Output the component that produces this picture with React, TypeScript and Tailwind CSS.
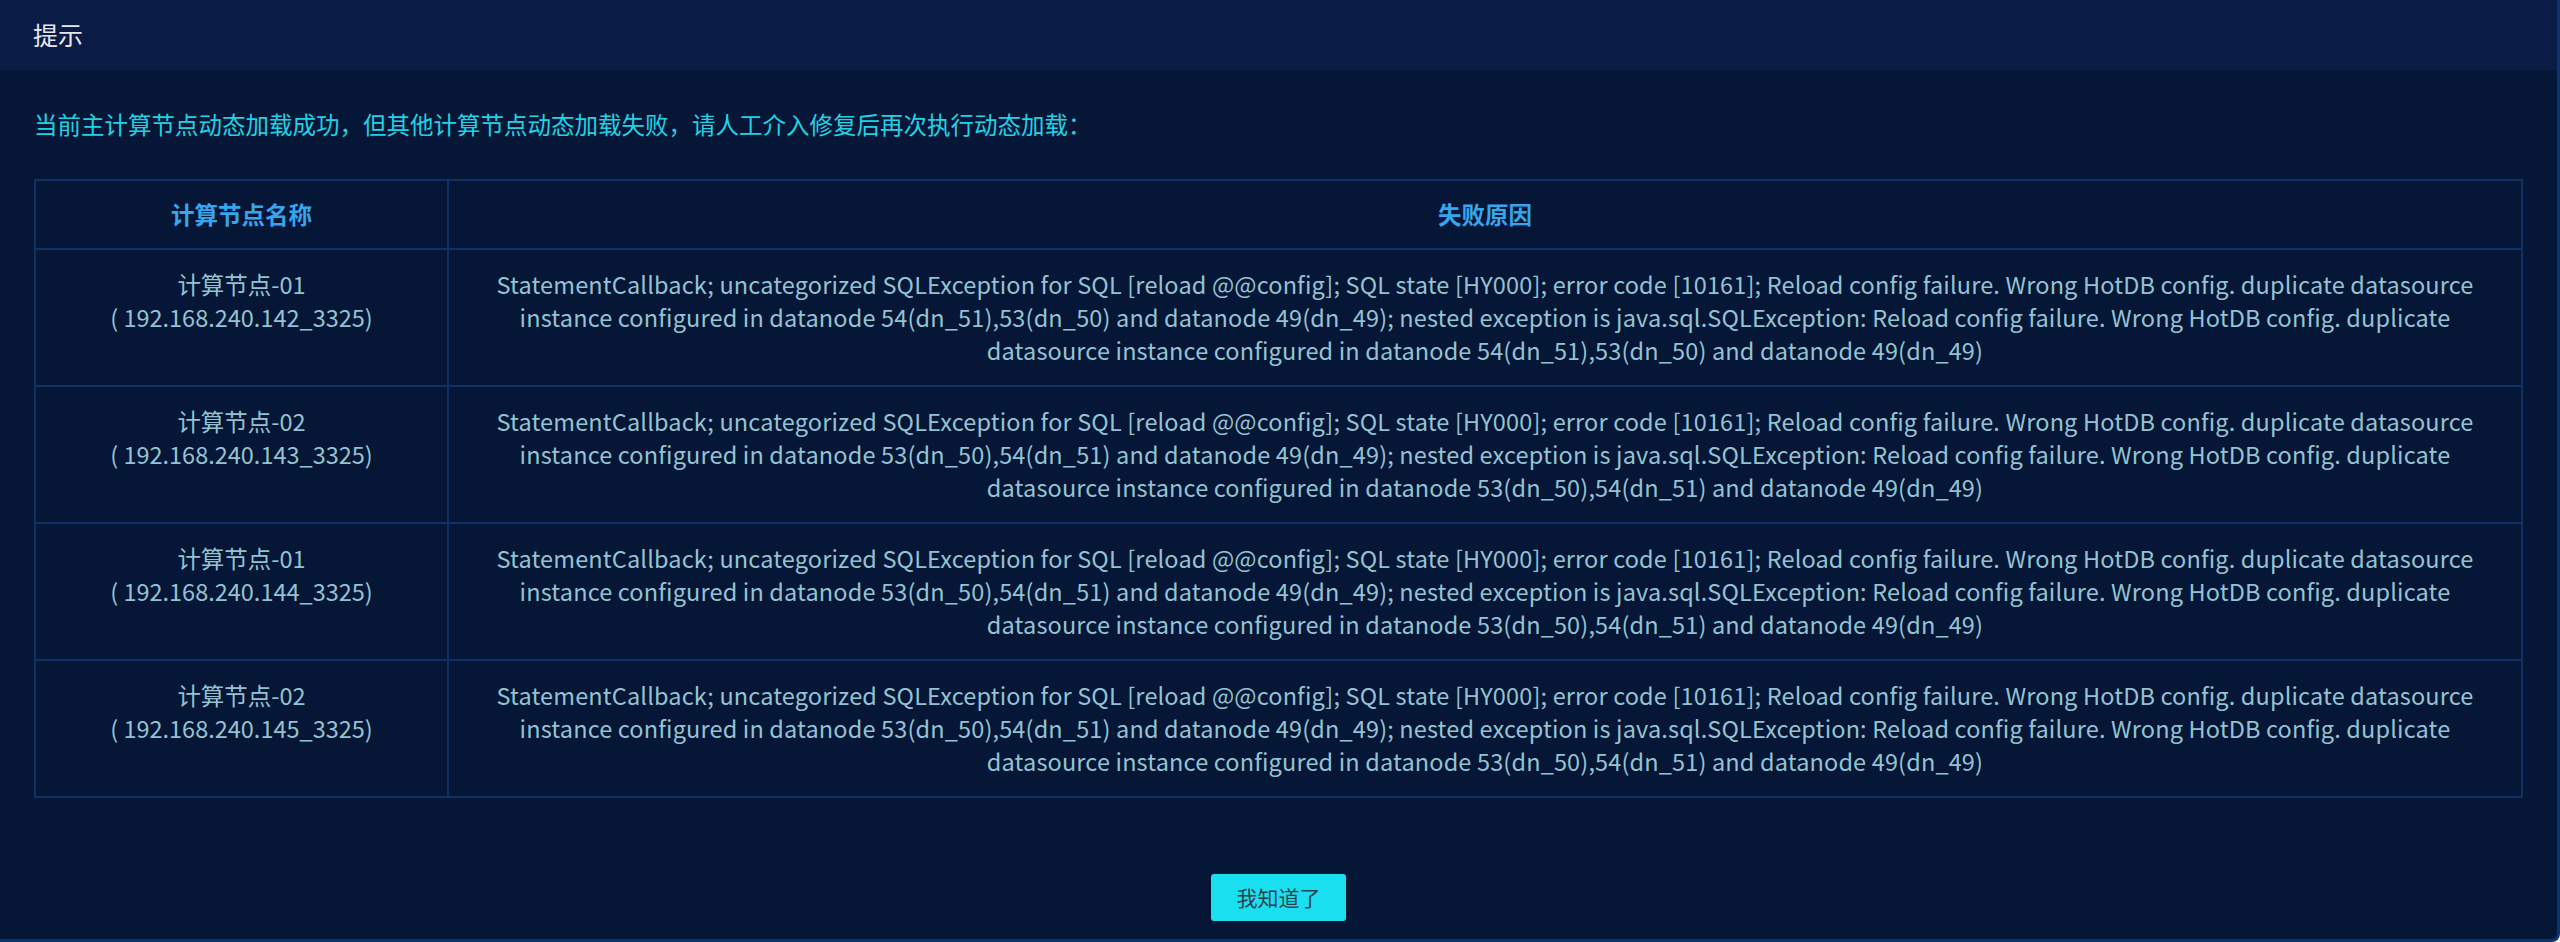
const reason = (a: string, b: string) =>
  `StatementCallback; uncategorized SQLException for SQL [reload @@config]; SQL state [HY000]; error code [10161]; Reload config failure. Wrong HotDB config. duplicate datasource instance configured in datanode ${a} and datanode 49(dn_49); nested exception is java.sql.SQLException: Reload config failure. Wrong HotDB config. duplicate datasource instance configured in datanode ${b} and datanode 49(dn_49)`;

const rows = [
  { name: "计算节点-01", host: "( 192.168.240.142_3325)", msg: reason("54(dn_51),53(dn_50)", "54(dn_51),53(dn_50)") },
  { name: "计算节点-02", host: "( 192.168.240.143_3325)", msg: reason("53(dn_50),54(dn_51)", "53(dn_50),54(dn_51)") },
  { name: "计算节点-01", host: "( 192.168.240.144_3325)", msg: reason("53(dn_50),54(dn_51)", "53(dn_50),54(dn_51)") },
  { name: "计算节点-02", host: "( 192.168.240.145_3325)", msg: reason("53(dn_50),54(dn_51)", "53(dn_50),54(dn_51)") },
];

export default function App() {
  return (
    <div className="w-[2560px] h-[942px] flex flex-col bg-[#061636] border-r-[3px] border-b-[3px] border-[#0c3570] rounded-br-lg overflow-hidden font-['Noto_Sans_CJK_SC',sans-serif]">
      <div className="h-[70px] shrink-0 flex items-center pl-[33px] bg-[#0a1c46] text-[25px] text-[#e4e8ee]">
        提示
      </div>

      <div className="flex-1 flex flex-col px-[34px]">
        <p className="mt-[38px] text-[23.5px] leading-[33px] text-[#1fd3e6]">
          当前主计算节点动态加载成功，但其他计算节点动态加载失败，请人工介入修复后再次执行动态加载：
        </p>

        <table className="mt-[38px] w-full border-collapse text-[23.5px] leading-[33px] text-[#93c3d2]">
          <thead>
            <tr>
              <th className="w-[413px] h-[69px] border-2 border-[#0e3264] font-bold text-[#35a6ee]">计算节点名称</th>
              <th className="h-[69px] border-2 border-[#0e3264] font-bold text-[#35a6ee]">失败原因</th>
            </tr>
          </thead>
          <tbody>
            {rows.map((r, i) => (
              <tr key={i}>
                <td className="border-2 border-[#0e3264] py-[18px] px-[20px] text-center align-top">
                  <div>{r.name}</div>
                  <div>{r.host}</div>
                </td>
                <td className="border-2 border-[#0e3264] py-[18px] px-[28px] text-center align-top tracking-[0.15px]">
                  {r.msg}
                </td>
              </tr>
            ))}
          </tbody>
        </table>

        <div className="mt-[76px] flex justify-center">
          <button className="w-[135px] h-[47px] rounded-[3px] bg-[#1adfee] text-[21px] text-[#2a3f4e]">
            我知道了
          </button>
        </div>
      </div>
    </div>
  );
}
